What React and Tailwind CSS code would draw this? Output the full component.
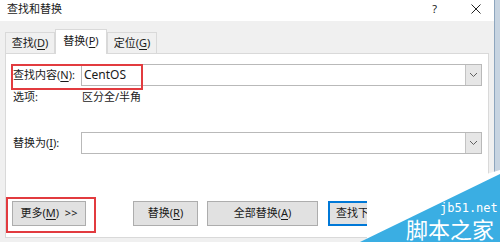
import React from "react";

const font = { fontFamily: '"Noto Sans", "Noto Sans CJK SC", sans-serif' };

function U({ children }) {
  return <span className="underline underline-offset-2">{children}</span>;
}

function Chevron() {
  return (
    <svg width="9" height="6" viewBox="0 0 9 6" fill="none">
      <path d="M1 1l3.5 3.5L8 1" stroke="#606060" strokeWidth="1" />
    </svg>
  );
}

function ComboBox({ value }) {
  return (
    <div className="flex h-[22px] w-[401px] border border-[#b9b9b9] bg-white">
      <div className="flex flex-1 items-center pl-[2px] text-[12px] text-[#1a1a1a]">{value}</div>
      <div className="flex w-[16px] items-center justify-center border-l border-[#c3c3c3] bg-[#e6e6e6]">
        <Chevron />
      </div>
    </div>
  );
}

function Button({ children, width, focused }) {
  return (
    <div
      className={`flex h-[25px] items-center justify-center text-[11px] text-[#1a1a1a] ${width} ${
        focused ? "border-2 border-[#0078d7] bg-[#e1e1e1]" : "border border-[#adadad] bg-[#e1e1e1]"
      }`}
    >
      {children}
    </div>
  );
}

function Tab({ children, active }) {
  if (active) {
    return (
      <div className="relative z-10 -mb-px flex h-[25px] w-[52px] items-center justify-center border border-b-0 border-[#d9d9d9] bg-white pb-[2px] text-[11px] text-[#1a1a1a]">
        {children}
      </div>
    );
  }
  return (
    <div className="mt-[3px] flex h-[21px] w-[50px] items-center justify-center border border-b-0 border-[#d9d9d9] bg-[#f0f0f0] text-[11px] text-[#1a1a1a]">
      {children}
    </div>
  );
}

export default function App() {
  return (
    <div className="relative flex h-[242px] w-[500px] overflow-hidden bg-[#f0f0f0]" style={font}>
      <div className="flex w-[494px] flex-col">
        {/* title bar */}
        <div className="flex h-[21px] items-center bg-white pl-[7px] text-[11px] text-[#1a1a1a]">
          <span className="flex-1 pb-[3px]">查找和替换</span>
          <span className="mr-[34px] pb-[3px] text-[11px]">?</span>
          <svg className="mr-[13px] mb-[4px]" width="10" height="10" viewBox="0 0 10 10">
            <path d="M0.5 0.5l9 9M9.5 0.5l-9 9" stroke="#222" strokeWidth="1" />
          </svg>
        </div>

        <div className="flex flex-1 flex-col px-[5px] pt-[8px]">
          {/* tabs */}
          <div className="flex h-[24px] items-start">
            <Tab>
              查找(<U>D</U>)
            </Tab>
            <Tab active>
              替换(<U>P</U>)
            </Tab>
            <Tab>
              定位(<U>G</U>)
            </Tab>
          </div>

          {/* panel */}
          <div className="relative flex h-[185px] w-[484px] flex-col border border-[#d9d9d9] bg-white pl-[7px]">
            <div className="mt-[10px] flex h-[22px] items-center">
              <span className="w-[68px] text-[11px] text-[#1a1a1a]">
                查找内容(<U>N</U>):
              </span>
              <ComboBox value="CentOS" />
            </div>
            <div className="flex h-[22px] items-center">
              <span className="w-[69px] text-[11px] text-[#1a1a1a]">选项:</span>
              <span className="text-[11px] text-[#1a1a1a]">区分全/半角</span>
            </div>
            <div className="mt-[24px] flex h-[22px] items-center">
              <span className="w-[68px] text-[11px] text-[#1a1a1a]">
                替换为(<U>I</U>):
              </span>
              <ComboBox value="" />
            </div>
            <div className="mt-[47px] flex items-center">
              <Button width="w-[74px] ml-[-1px]">
                更多(<U>M</U>)&nbsp;&nbsp;&gt;&gt;
              </Button>
              <div className="w-[47px]" />
              <Button width="w-[65px]">
                替换(<U>R</U>)
              </Button>
              <div className="w-[9px]" />
              <Button width="w-[111px]">
                全部替换(<U>A</U>)
              </Button>
              <div className="w-[10px]" />
              <Button width="w-[111px] justify-start pl-[6px]" focused>
                查找下一处(<U>F</U>)
              </Button>
            </div>

            {/* red annotation boxes */}
            <div className="absolute left-[5px] top-[10px] h-[26px] w-[132px] border-2 border-[#e23b3f]" />
            <div className="absolute left-[0px] top-[143px] h-[36px] w-[90px] border-2 border-[#e23b3f]" />
          </div>
        </div>
      </div>

      {/* background window edge */}
      <div className="flex-1 border-l border-[#8ea6be] bg-[#c7d4e1]" />

      {/* watermark */}
      <svg className="pointer-events-none absolute left-0 top-0" width="500" height="242" viewBox="0 0 500 242">
        <path d="M367 242 L367 198 C410 190 455 184 500 170 L500 242 Z" fill="#ffffff" />
        <path d="M360 242 L500 174 L500 242 Z" fill="#3aaee3" />
      </svg>
      <div
        className="pointer-events-none absolute left-[440px] top-[202px] text-[12px] leading-[12px] text-white"
        style={{ fontFamily: '"DejaVu Sans Mono", monospace' }}
      >
        jb51.net
      </div>
      <div
        className="pointer-events-none absolute left-[406px] top-[217px] text-[22px] leading-[22px] text-white"
        style={{ fontFamily: '"Noto Sans CJK SC", sans-serif' }}
      >
        脚本之家
      </div>
    </div>
  );
}
